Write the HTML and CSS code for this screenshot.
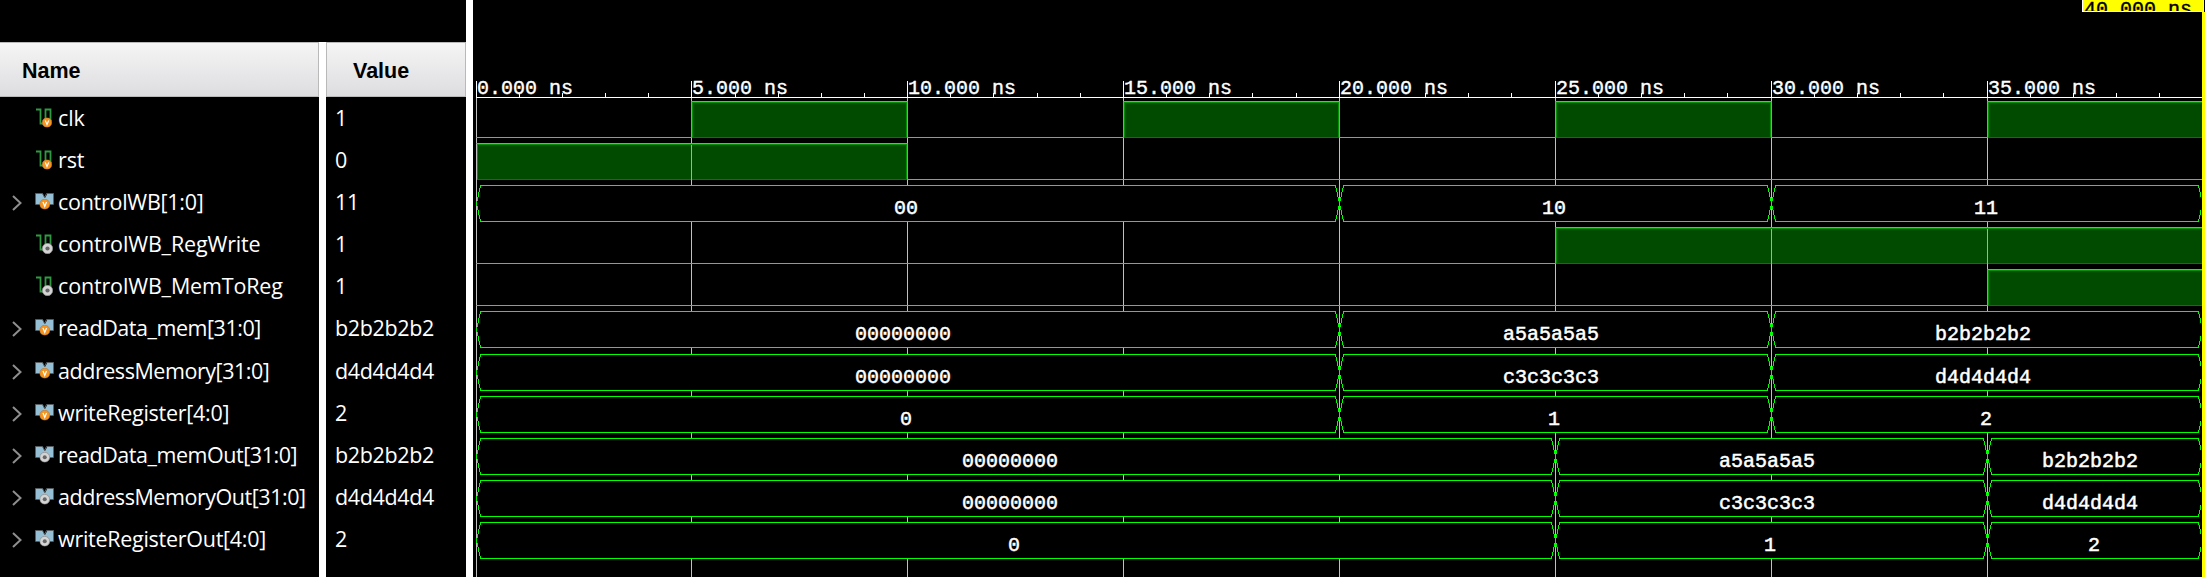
FILE: index.html
```html
<!DOCTYPE html>
<html lang="en">
<head>
<meta charset="utf-8">
<title>Waveform</title>
<link rel="stylesheet" href="styles.css">
</head>
<body>
<svg class="defs" aria-hidden="true">
  <defs>
    <symbol id="badge-v" viewBox="0 0 10 10">
      <circle cx="5" cy="5" r="4.8" fill="#f7941e" stroke="#a8794a" stroke-width=".6"/>
      <path d="M3.3 2.9 5 7 6.7 2.9" fill="none" stroke="#fff" stroke-width="1.2"/>
    </symbol>
    <symbol id="badge-o" viewBox="0 0 10 10">
      <circle cx="5" cy="5" r="4.7" fill="#d4d4d4" stroke="#8c8c8c" stroke-width=".7"/>
      <circle cx="5" cy="5" r="1.9" fill="#666"/>
    </symbol>
    <symbol id="scalar" viewBox="0 0 20 20">
      <path d="M1 1.5H5.5V15.5H10.5V1.5H15.5V13" fill="none" stroke="#2f9a41" stroke-width="1.8"/>
    </symbol>
    <symbol id="bus" viewBox="0 0 20 20">
      <path d="M.5 1.5H7.5L10 6 12.5 1.5H18.5V12.5H.5Z" fill="#94bfd4"/>
      <path d="M.5 12.5V1.5H7.5L9.5 5.5 11.5 1.5H18.5V12.5" fill="none" stroke="#555e63"/>
    </symbol>
    <symbol id="i-sv" viewBox="0 0 20 20"><use href="#scalar" width="20" height="20"/><use href="#badge-v" x="7" y="9.5" width="10" height="10"/></symbol>
    <symbol id="i-so" viewBox="0 0 20 20"><use href="#scalar" width="20" height="20"/><use href="#badge-o" x="7" y="9" width="11" height="11"/></symbol>
    <symbol id="i-bv" viewBox="0 0 20 20"><use href="#bus" width="20" height="20"/><use href="#badge-v" x="4.5" y="7" width="10.5" height="10.5"/></symbol>
    <symbol id="i-bo" viewBox="0 0 20 20"><use href="#bus" width="20" height="20"/><use href="#badge-o" x="4.5" y="7" width="10.5" height="10.5"/></symbol>
    <symbol id="arrow" viewBox="0 0 10 16"><path d="M1 1 8.5 8 1 15" fill="none" stroke="#8e8e8e" stroke-width="2"/></symbol>
  </defs>
</svg>
<main class="viewer">
  <section class="panel names">
    <h2 class="head">Name</h2>
    <ul class="rows">
      <li class="row"><span class="toggle"></span><svg class="icon"><use href="#i-sv"/></svg><span class="label">clk</span></li>
      <li class="row"><span class="toggle"></span><svg class="icon"><use href="#i-sv"/></svg><span class="label">rst</span></li>
      <li class="row"><svg class="toggle"><use href="#arrow"/></svg><svg class="icon"><use href="#i-bv"/></svg><span class="label snug">controlWB[1:0]</span></li>
      <li class="row"><span class="toggle"></span><svg class="icon"><use href="#i-so"/></svg><span class="label">controlWB_RegWrite</span></li>
      <li class="row"><span class="toggle"></span><svg class="icon"><use href="#i-so"/></svg><span class="label">controlWB_MemToReg</span></li>
      <li class="row tall"><svg class="toggle"><use href="#arrow"/></svg><svg class="icon"><use href="#i-bv"/></svg><span class="label tight">readData_mem[31:0]</span></li>
      <li class="row"><svg class="toggle"><use href="#arrow"/></svg><svg class="icon"><use href="#i-bv"/></svg><span class="label tight">addressMemory[31:0]</span></li>
      <li class="row"><svg class="toggle"><use href="#arrow"/></svg><svg class="icon"><use href="#i-bv"/></svg><span class="label snug">writeRegister[4:0]</span></li>
      <li class="row"><svg class="toggle"><use href="#arrow"/></svg><svg class="icon"><use href="#i-bo"/></svg><span class="label tight">readData_memOut[31:0]</span></li>
      <li class="row"><svg class="toggle"><use href="#arrow"/></svg><svg class="icon"><use href="#i-bo"/></svg><span class="label tight">addressMemoryOut[31:0]</span></li>
      <li class="row"><svg class="toggle"><use href="#arrow"/></svg><svg class="icon"><use href="#i-bo"/></svg><span class="label snug">writeRegisterOut[4:0]</span></li>
    </ul>
  </section>
  <div class="splitter short"></div>
  <section class="panel values">
    <h2 class="head">Value</h2>
    <ul class="rows">
      <li class="row">1</li><li class="row">0</li><li class="row">11</li><li class="row">1</li><li class="row">1</li>
      <li class="row tall">b2b2b2b2</li><li class="row">d4d4d4d4</li><li class="row">2</li>
      <li class="row">b2b2b2b2</li><li class="row">d4d4d4d4</li><li class="row">2</li>
    </ul>
  </section>
  <div class="splitter"></div>
  <svg class="wave" viewBox="0 0 1732 577" width="1732" height="577">
    <defs>
      <path id="x" class="edge" d="M-3.5 0V3M-2.5 3V7M-1.5 7V12M-.5 12V16M4.5 0V3M3.5 3V7M2.5 7V12M1.5 12V16M.5 13V24M-.5 21V25M-1.5 25V30M-2.5 30V34M-3.5 34V37M1.5 21V25M2.5 25V30M3.5 30V34M4.5 34V37"/>
      <path id="l" class="edge" d="M4.5 0V3M3.5 3V7M2.5 7V12M1.5 12V16M.5 16V21M1.5 21V25M2.5 25V30M3.5 30V34M4.5 34V37"/>
      <path id="r" class="edge" d="M-3.5 0V3M-2.5 3V7M-1.5 7V12M-1.5 25V30M-2.5 30V34M-3.5 34V37"/>
      <g id="bus-a">
        <path class="box" d="M7.5 .5H862.5V36.5H7.5ZM870.5 .5H1294.5V36.5H870.5ZM1302.5 .5H1726.5V36.5H1302.5Z"/>
        <path class="edge" d="M7 .5H863M870 .5H1295M1302 .5H1726M7 36.5H863M870 36.5H1295M1302 36.5H1726"/>
        <use href="#l" x="3"/><use href="#x" x="866"/><use href="#x" x="1298"/><use href="#r" x="1729"/>
      </g>
      <g id="bus-b">
        <path class="box" d="M7.5 .5H1078.5V36.5H7.5ZM1086.5 .5H1510.5V36.5H1086.5ZM1518.5 .5H1726.5V36.5H1518.5Z"/>
        <path class="edge" d="M7 .5H1079M1086 .5H1511M1518 .5H1726M7 36.5H1079M1086 36.5H1511M1518 36.5H1726"/>
        <use href="#l" x="3"/><use href="#x" x="1082"/><use href="#x" x="1514"/><use href="#r" x="1729"/>
      </g>
    </defs>
    <path class="grid" d="M3.5 98V577M218.5 98V577M434.5 98V577M650.5 98V577M866.5 98V577M1082.5 98V577M1298.5 98V577M1514.5 98V577"/>
    <path class="ruler" d="M3 97.5H1729M3.5 81V98M218.5 81V98M434.5 81V98M650.5 81V98M866.5 81V98M1082.5 81V98M1298.5 81V98M1514.5 81V98"/>
    <path class="ruler" d="M46.5 93V97M89.5 93V97M132.5 93V97M175.5 93V97M262.5 93V97M305.5 93V97M348.5 93V97M391.5 93V97M477.5 93V97M520.5 93V97M564.5 93V97M607.5 93V97M693.5 93V97M736.5 93V97M779.5 93V97M823.5 93V97M909.5 93V97M952.5 93V97M995.5 93V97M1038.5 93V97M1125.5 93V97M1168.5 93V97M1211.5 93V97M1254.5 93V97M1341.5 93V97M1384.5 93V97M1427.5 93V97M1470.5 93V97M1557.5 93V97M1600.5 93V97M1643.5 93V97M1686.5 93V97"/>
    <g class="time">
      <text x="4" y="94">0.000 ns</text><text x="219" y="94">5.000 ns</text><text x="435" y="94">10.000 ns</text><text x="651" y="94">15.000 ns</text>
      <text x="867" y="94">20.000 ns</text><text x="1083" y="94">25.000 ns</text><text x="1299" y="94">30.000 ns</text><text x="1515" y="94">35.000 ns</text>
    </g>
    <path class="high" d="M218 101H435V138H218ZM650 101H867V138H650ZM1082 101H1299V138H1082ZM1514 101H1729V138H1514ZM4 143H435V180H4ZM1082 227H1729V264H1082ZM1514 269H1729V306H1514Z"/>
    <path class="inner" d="M219.5 138V102.5H433.5V138M651.5 138V102.5H865.5V138M1083.5 138V102.5H1297.5V138M1515.5 138V102.5H1729M4.5 180V144.5H433.5V180M1083.5 264V228.5H1729M1515.5 306V270.5H1729"/>
    <path class="base" d="M219 137.5H434M651 137.5H866M1083 137.5H1298M1515 137.5H1729M4 179.5H434M1083 263.5H1729M1515 305.5H1729"/>
    <path class="grid-high" d="M218.5 145V180M1298.5 229V264M1514.5 229V264"/>
    <path class="edge" d="M3 137.5H218.5V101.5H434.5V137.5H650.5V101.5H866.5V137.5H1082.5V101.5H1298.5V137.5H1514.5V101.5H1729M3 143.5H434.5V179.5H1729M3 263.5H1082.5V227.5H1729M3 305.5H1514.5V269.5H1729"/>
    <use href="#bus-a" y="185"/><use href="#bus-a" y="311"/><use href="#bus-a" y="354"/><use href="#bus-a" y="396"/>
    <use href="#bus-b" y="438"/><use href="#bus-b" y="480"/><use href="#bus-b" y="522"/>
    <g class="data">
      <text x="433" y="214">00</text><text x="1081" y="214">10</text><text x="1513" y="214">11</text>
      <text x="430" y="340">00000000</text><text x="1078" y="340">a5a5a5a5</text><text x="1510" y="340">b2b2b2b2</text>
      <text x="430" y="383">00000000</text><text x="1078" y="383">c3c3c3c3</text><text x="1510" y="383">d4d4d4d4</text>
      <text x="433" y="425">0</text><text x="1081" y="425">1</text><text x="1513" y="425">2</text>
      <text x="537" y="467">00000000</text><text x="1294" y="467">a5a5a5a5</text><text x="1617" y="467">b2b2b2b2</text>
      <text x="537" y="509">00000000</text><text x="1294" y="509">c3c3c3c3</text><text x="1617" y="509">d4d4d4d4</text>
      <text x="541" y="551">0</text><text x="1297" y="551">1</text><text x="1621" y="551">2</text>
    </g>
    <rect class="cursor" x="1729" y="12" width="3" height="565"/>
    <path class="cursor" d="M1609 0H1730V12H1609Z"/>
    <svg x="1609" y="0" width="123" height="11"><text class="stamp" x="2" y="15">40.000 ns</text></svg>
    <path class="ruler" d="M1609.5 0V11.5H1730.5V0"/>
  </svg>
</main>
</body>
</html>
```
FILE: styles.css
```css
* { box-sizing: border-box; }
body { margin: 0; background: #000; color: #fff; }
.defs { display: block; width: 0; height: 0; }
.viewer { display: flex; width: 2205px; height: 577px; overflow: hidden; background: #000; }
.panel { padding-top: 42px; flex: none; }
.names { width: 319px; }
.values { width: 140px; }
.splitter { flex: none; width: 7px; background: #fff; }
.splitter.short { margin-top: 42px; }
.head {
  height: 55px; margin: 0; padding: 2px 0 0 22px;
  border: 1px solid #b9b9b9; border-left: 0;
  background: linear-gradient(#f5f5f5, #dddde0);
  color: #000; font: bold 21.5px/53px "Liberation Sans", sans-serif;
}
.values .head { border-left: 1px solid #b9b9b9; padding-left: 26px; }
.rows { list-style: none; margin: 0; padding: 0; }
.row { display: flex; align-items: center; height: 42px; font: 21.5px/42px "Open Sans", "Noto Sans", sans-serif; white-space: nowrap; }
.row.tall { height: 43px; padding-bottom: 1px; }
.values .row { padding-left: 9px; letter-spacing: -.35px; }
.label { letter-spacing: -.15px; }
.label.snug { letter-spacing: -.27px; }
.label.tight { letter-spacing: -.45px; }
.toggle { width: 10px; height: 16px; margin: 2px 13px 0 12px; flex: none; }
.icon { width: 20px; height: 20px; margin-right: 3px; flex: none; }
.wave { display: block; flex: none; shape-rendering: crispEdges; }
.wave text { font-family: "Liberation Mono", monospace; font-size: 20px; }
.time, .data { fill: #fff; stroke: #fff; stroke-width: .4px; }
.data { text-anchor: middle; stroke-width: .5px; }
.grid { stroke: #c0c0c0; fill: none; }
.grid-high { stroke: #84c484; fill: none; }
.ruler { stroke: #fff; fill: none; }
.high { fill: #004b00; }
.inner { fill: none; stroke: #009600; }
.base { fill: none; stroke: #007d00; }
.edge { fill: none; stroke: #00ff00; }
.box { fill: #000; stroke: none; }
.cursor { fill: #ff0; }
.stamp { fill: #000; stroke: #000; stroke-width: .4px; }
```
